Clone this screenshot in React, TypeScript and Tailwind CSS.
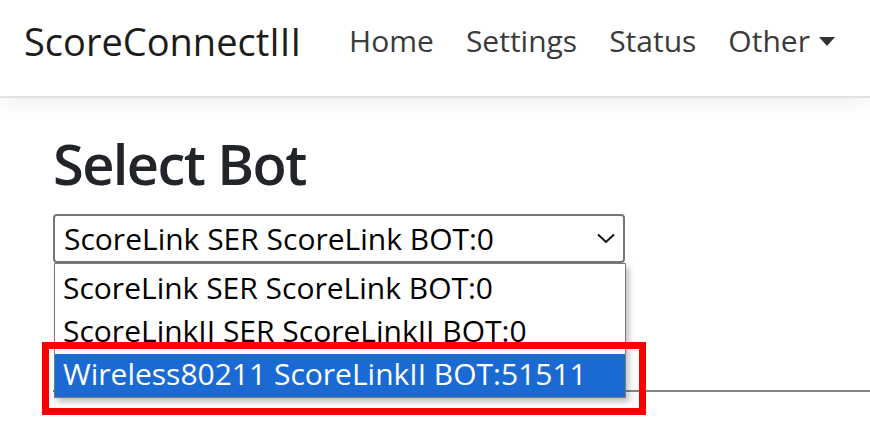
import React from "react";

const options = [
  "ScoreLink SER ScoreLink BOT:0",
  "ScoreLinkII SER ScoreLinkII BOT:0",
  "Wireless80211 ScoreLinkII BOT:51511",
];

function NavBar() {
  const links = ["Home", "Settings", "Status"];
  return (
    <nav className="relative z-10 flex h-[98px] items-center border-b-2 border-[#dee2e6] bg-white pb-[14px] pl-[24px] shadow-[0_6px_18px_rgba(0,0,0,0.06)]">
      <a className="text-[38px] leading-none text-[#1c1c1c]">ScoreConnectIII</a>
      <ul className="ml-[48px] flex items-center gap-[32px] text-[30px] leading-none text-[#3a3a3a]">
        {links.map((l) => (
          <li key={l}>{l}</li>
        ))}
        <li className="flex items-center">
          Other
          <span className="ml-[9px] mt-[1px] h-0 w-0 border-x-[8px] border-t-[9px] border-x-transparent border-t-[#333]" />
        </li>
      </ul>
    </nav>
  );
}

function BotSelect() {
  return (
    <div className="relative w-[572px]">
      {/* closed select */}
      <div className="flex h-[49px] items-center justify-between rounded-[4px] border-2 border-[#767676] bg-white pl-[9px] pr-[8px] text-[30px] leading-none text-black">
        <span>{options[0]}</span>
        <svg width="18" height="11" viewBox="0 0 18 11" fill="none">
          <path d="M1 1.5L9 9L17 1.5" stroke="#111" strokeWidth="2" />
        </svg>
      </div>

      {/* open option list */}
      <div className="absolute left-[1px] top-[49px] z-20 w-[572px] border border-[#7a7a7a] bg-white pt-[4px] shadow-[3px_4px_6px_rgba(0,0,0,0.25)]">
        {options.map((o, i) => (
          <div
            key={o}
            className={`flex h-[43px] items-center pb-[4px] pl-[8px] text-[30px] leading-none ${
              i === 2 ? "bg-[#1b6ad3] text-white" : "text-black"
            }`}
          >
            {o}
          </div>
        ))}
      </div>

      {/* highlight marker */}
      <div className="absolute left-[-11px] top-[128px] z-30 h-[73px] w-[604px] border-[7px] border-[#ff0000]" />
    </div>
  );
}

export default function App() {
  return (
    <div className="h-[440px] overflow-hidden bg-white font-['Open_Sans',sans-serif]">
      <NavBar />
      <main className="pl-[53px]">
        <h2 className="mt-[37px] text-[56px] font-semibold leading-none tracking-[-1.6px] text-[#212529]">
          Select Bot
        </h2>
        <div className="mt-[23px]">
          <BotSelect />
        </div>
        <hr className="mt-[127px] border-t-2 border-[#858585]" />
      </main>
    </div>
  );
}
